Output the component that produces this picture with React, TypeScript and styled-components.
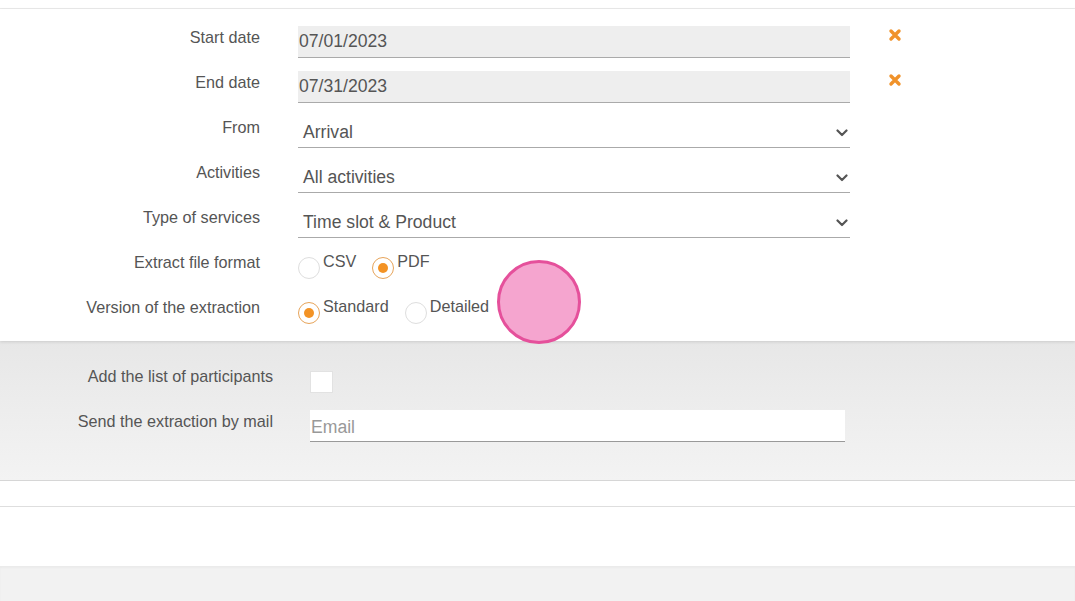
import React from "react";
import styled, { createGlobalStyle } from "styled-components";

const Global = createGlobalStyle`
  html, body { margin: 0; padding: 0; background: #ffffff; }
  body { font-family: "Liberation Sans", Arial, sans-serif; color: #555; }
  * { box-sizing: border-box; }
`;

const Page = styled.div`
  position: relative;
  display: flex;
  flex-direction: column;
  min-height: 601px;
  overflow: hidden;
`;

const TopStrip = styled.div`
  height: 9px;
  border-bottom: 1px solid #ebebeb;
`;

const MainPanel = styled.section`
  position: relative;
  z-index: 1;
  display: flex;
  flex-direction: column;
  gap: 13px;
  padding: 17px 0 13px;
  background: #fff;
  box-shadow: 0 1px 3px rgba(0, 0, 0, 0.12);
`;

const OptionsPanel = styled.section`
  display: flex;
  flex-direction: column;
  gap: 13px;
  padding: 24px 0 38px;
  background: linear-gradient(#e7e7e7, #f3f3f3);
  border-bottom: 1px solid #d6d6d6;
`;

const Row = styled.div<{ $label: number; $gap: number; $control: number }>`
  display: grid;
  grid-template-columns: ${(p) => p.$label}px ${(p) => p.$control}px auto;
  column-gap: ${(p) => p.$gap}px;
  height: 32px;
  align-items: start;
`;

const Label = styled.div`
  text-align: right;
  font-size: 16.2px;
  line-height: 18px;
  padding-top: 2px;
  color: #555;
  white-space: nowrap;
`;

const DateInput = styled.div`
  height: 32px;
  padding: 5px 1px 0;
  background: #eeeeee;
  border-bottom: 1px solid #aaaaaa;
  font-size: 17.6px;
  line-height: 20px;
  color: #555;
`;

const SelectBox = styled.div`
  height: 32px;
  display: flex;
  align-items: flex-start;
  justify-content: space-between;
  padding: 6px 2px 0 5px;
  border-bottom: 1px solid #aaaaaa;
  font-size: 17.6px;
  line-height: 20px;
  color: #555;
`;

const Chevron = styled.svg`
  width: 12px;
  height: 8px;
  margin-top: 7px;
`;

const ClearIcon = styled.svg`
  width: 14px;
  height: 14px;
  margin-top: 2px;
`;

const RadioGroup = styled.div`
  display: flex;
  align-items: flex-start;
  gap: 16px;
`;

const RadioOption = styled.label`
  display: flex;
  align-items: flex-start;
  gap: 3px;
  font-size: 16.2px;
  line-height: 18px;
  color: #555;
`;

const RadioText = styled.span`
  padding-top: 1px;
`;

const RadioCircle = styled.span<{ $checked?: boolean }>`
  position: relative;
  width: 22px;
  height: 22px;
  margin-top: 6px;
  border-radius: 50%;
  background: #fff;
  border: 1px solid ${(p) => (p.$checked ? "#e7a45a" : "#dedede")};
  &::after {
    content: "";
    display: ${(p) => (p.$checked ? "block" : "none")};
    position: absolute;
    left: 50%;
    top: 50%;
    width: 10px;
    height: 10px;
    margin: -5px 0 0 -5px;
    border-radius: 50%;
    background: #f39325;
  }
`;

const Checkbox = styled.span`
  display: block;
  width: 23px;
  height: 22px;
  margin-top: 6px;
  background: #fff;
  border: 1px solid #e2e2e2;
`;

const EmailInput = styled.input`
  height: 32px;
  width: 100%;
  padding: 4px 1px 0;
  border: none;
  border-bottom: 1px solid #999;
  background: #fff;
  outline: none;
  font-family: "Liberation Sans", Arial, sans-serif;
  font-size: 17.6px;
  line-height: 20px;
  color: #555;
  &::placeholder { color: #999; }
`;

const ThinBand = styled.div`
  height: 26px;
  background: #fff;
  border-bottom: 1px solid #dedede;
`;

const WhiteBand = styled.div`
  height: 59px;
  background: #fff;
`;

const BottomArea = styled.div`
  flex: 1;
  background: #f2f2f2;
  box-shadow: inset 0 2px 2px rgba(0, 0, 0, 0.03);
`;

const ClickMarker = styled.div`
  position: absolute;
  left: 497px;
  top: 260px;
  width: 84px;
  height: 84px;
  border-radius: 50%;
  background: #f5a5cf;
  border: 3px solid #e5509b;
  z-index: 5;
  pointer-events: none;
`;

const XIcon = () => (
  <ClearIcon viewBox="0 0 14 14">
    <path d="M3 3 L11 11 M11 3 L3 11" stroke="#f0922a" strokeWidth="3.4" strokeLinecap="round" />
  </ClearIcon>
);

const Down = () => (
  <Chevron viewBox="0 0 12 8">
    <path d="M1.5 1.5 L6 6 L10.5 1.5" stroke="#555" strokeWidth="2.2" fill="none" strokeLinecap="round" strokeLinejoin="round" />
  </Chevron>
);

const M = { $label: 260, $gap: 38, $control: 552 };
const O = { $label: 273, $gap: 37, $control: 535 };

export default function App() {
  return (
    <Page>
      <Global />
      <TopStrip />
      <MainPanel>
        <Row {...M}>
          <Label>Start date</Label>
          <DateInput>07/01/2023</DateInput>
          <XIcon />
        </Row>
        <Row {...M}>
          <Label>End date</Label>
          <DateInput>07/31/2023</DateInput>
          <XIcon />
        </Row>
        <Row {...M}>
          <Label>From</Label>
          <SelectBox>
            <span>Arrival</span>
            <Down />
          </SelectBox>
        </Row>
        <Row {...M}>
          <Label>Activities</Label>
          <SelectBox>
            <span>All activities</span>
            <Down />
          </SelectBox>
        </Row>
        <Row {...M}>
          <Label>Type of services</Label>
          <SelectBox>
            <span>Time slot &amp; Product</span>
            <Down />
          </SelectBox>
        </Row>
        <Row {...M}>
          <Label>Extract file format</Label>
          <RadioGroup>
            <RadioOption>
              <RadioCircle />
              <RadioText>CSV</RadioText>
            </RadioOption>
            <RadioOption>
              <RadioCircle $checked />
              <RadioText>PDF</RadioText>
            </RadioOption>
          </RadioGroup>
        </Row>
        <Row {...M}>
          <Label>Version of the extraction</Label>
          <RadioGroup>
            <RadioOption>
              <RadioCircle $checked />
              <RadioText>Standard</RadioText>
            </RadioOption>
            <RadioOption>
              <RadioCircle />
              <RadioText>Detailed</RadioText>
            </RadioOption>
          </RadioGroup>
        </Row>
      </MainPanel>
      <OptionsPanel>
        <Row {...O}>
          <Label>Add the list of participants</Label>
          <Checkbox />
        </Row>
        <Row {...O}>
          <Label>Send the extraction by mail</Label>
          <EmailInput placeholder="Email" />
        </Row>
      </OptionsPanel>
      <ThinBand />
      <WhiteBand />
      <BottomArea />
      <ClickMarker />
    </Page>
  );
}
